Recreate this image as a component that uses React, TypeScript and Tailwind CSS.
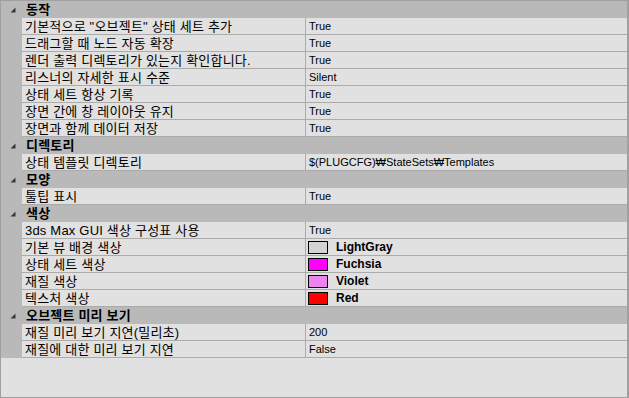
import React from 'react';

type Item = { name: string; value: string; color?: string };
type Category = { title: string; items: Item[] };

const data: Category[] = [
  {
    title: '동작',
    items: [
      { name: '기본적으로 "오브젝트" 상태 세트 추가', value: 'True' },
      { name: '드래그할 때 노드 자동 확장', value: 'True' },
      { name: '렌더 출력 디렉토리가 있는지 확인합니다.', value: 'True' },
      { name: '리스너의 자세한 표시 수준', value: 'Silent' },
      { name: '상태 세트 항상 기록', value: 'True' },
      { name: '장면 간에 창 레이아웃 유지', value: 'True' },
      { name: '장면과 함께 데이터 저장', value: 'True' },
    ],
  },
  {
    title: '디렉토리',
    items: [{ name: '상태 템플릿 디렉토리', value: '$(PLUGCFG)₩StateSets₩Templates' }],
  },
  {
    title: '모양',
    items: [{ name: '툴팁 표시', value: 'True' }],
  },
  {
    title: '색상',
    items: [
      { name: '3ds Max GUI 색상 구성표 사용', value: 'True' },
      { name: '기본 뷰 배경 색상', value: 'LightGray', color: '#d3d3d3' },
      { name: '상태 세트 색상', value: 'Fuchsia', color: '#ff00ff' },
      { name: '재질 색상', value: 'Violet', color: '#ee82ee' },
      { name: '텍스처 색상', value: 'Red', color: '#ff0000' },
    ],
  },
  {
    title: '오브젝트 미리 보기',
    items: [
      { name: '재질 미리 보기 지연(밀리초)', value: '200' },
      { name: '재질에 대한 미리 보기 지연', value: 'False' },
    ],
  },
];

function Expander() {
  return (
    <svg width="6" height="6" viewBox="0 0 6 6" className="ml-[9px]">
      <polygon points="5.5,0.5 5.5,5.5 0.5,5.5" fill="#3a3a3a" />
    </svg>
  );
}

function Row({ item }: { item: Item }) {
  return (
    <div className="flex h-[17px]">
      <div className="w-[21px] shrink-0 bg-[#b9b9b9]" />
      <div className="flex flex-1 border-b border-[#ababab] bg-[#e1e1e1]">
        <div className="w-[284px] shrink-0 border-r border-[#ababab] pl-[3px] pt-[1px] text-[13px] leading-[15px] tracking-[0.2px] text-black [font-family:'Liberation_Sans','Noto_Sans_CJK_KR',sans-serif] truncate">
          {item.name}
        </div>
        <div className="flex flex-1 items-center pl-[2px] pt-[1px] text-[11px] leading-[15px] text-black [font-family:'Liberation_Sans','Noto_Sans_CJK_KR',sans-serif]">
          {item.color ? (
            <>
              <span
                className="h-[13px] w-[20px] border border-black"
                style={{ backgroundColor: item.color }}
              />
              <span className="ml-[8px] font-bold text-[12px]">{item.value}</span>
            </>
          ) : (
            <span className="pl-[1px]">{item.value}</span>
          )}
        </div>
      </div>
    </div>
  );
}

export default function App() {
  return (
    <div className="h-[398px] w-[629px] border border-[#a0a0a0] border-r-2 bg-[#e1e1e1] overflow-hidden">
      {data.map((cat) => (
        <div key={cat.title}>
          <div className="flex h-[17px] items-center bg-[#b9b9b9]">
            <div className="flex w-[21px] shrink-0 items-center">
              <Expander />
            </div>
            <span className="pl-[4px] pt-[1px] text-[13px] font-bold leading-[16px] tracking-[0.2px] text-black [font-family:'Liberation_Sans','Noto_Sans_CJK_KR',sans-serif]">
              {cat.title}
            </span>
          </div>
          {cat.items.map((item) => (
            <Row key={item.name} item={item} />
          ))}
        </div>
      ))}
    </div>
  );
}
